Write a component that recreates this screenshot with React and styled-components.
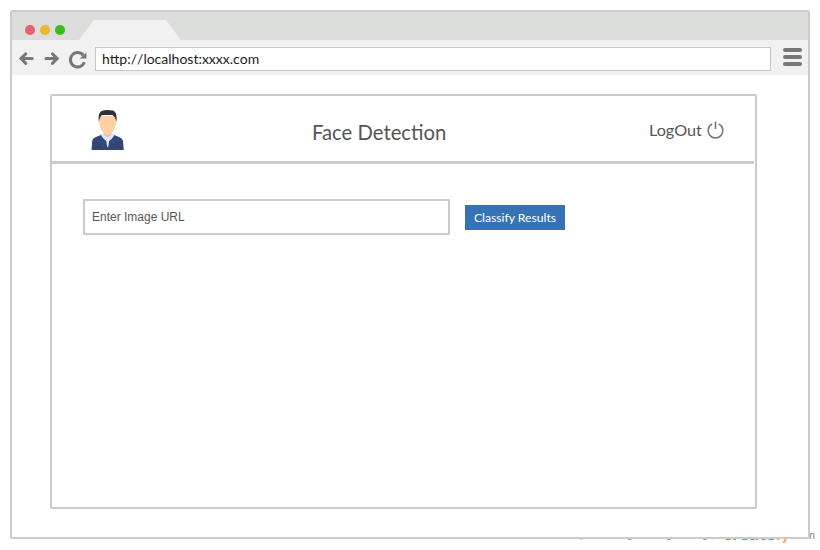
import React from "react";
import styled, { createGlobalStyle } from "styled-components";

const GlobalStyle = createGlobalStyle`
  * { box-sizing: border-box; }
  body { margin: 0; background: #fff; overflow: hidden; }
`;

const Page = styled.div`
  position: relative;
  width: 820px;
  height: 550px;
  padding: 10px;
  overflow: hidden;
  background: #fff;
  font-family: Lato, sans-serif;
`;

const Browser = styled.main`
  position: relative;
  width: 800px;
  height: 529px;
  border: 2px solid #cbcccb;
  border-radius: 2px;
  background: #fff;
`;

const TabBar = styled.div`
  display: flex;
  height: 28px;
  background: #dcdedb;
`;

const Dots = styled.div`
  display: flex;
  gap: 5.5px;
  width: 67px;
  padding: 13px 0 0 13.3px;
`;

const Dot = styled.span`
  width: 9.5px;
  height: 9.5px;
  border-radius: 50%;
  background: ${(p) => p.$color};
`;

const Tab = styled.div`
  width: 102px;
  height: 20px;
  margin-top: 8px;
  background: #f1f1f1;
  clip-path: polygon(0 100%, 15px 0, 87px 0, 100% 100%);
`;

const Toolbar = styled.div`
  display: flex;
  height: 35px;
  background: #f1f1f1;
`;

const NavIcons = styled.svg`
  width: 83px;
  height: 35px;
  flex: none;
`;

const Address = styled.div`
  width: 676px;
  height: 24px;
  margin-top: 7px;
  padding-left: 6px;
  border: 1px solid #c8c8c8;
  background: #fff;
  color: #1c1c1c;
  font-size: 14px;
  font-kerning: none;
  line-height: 22px;
`;

const Menu = styled.div`
  display: flex;
  flex-direction: column;
  gap: 3px;
  margin: 8px 0 0 12px;
`;

const MenuBar = styled.span`
  width: 19px;
  height: 4px;
  border-radius: 2px;
  background: #777;
`;

const Panel = styled.section`
  width: 707px;
  height: 415px;
  margin: 19px 0 0 38px;
  border: 2px solid #cbcbcb;
  border-radius: 2px;
`;

const Header = styled.header`
  display: flex;
  width: 702px;
  height: 68px;
  border-bottom: 3px solid #cbcbcb;
`;

const Avatar = styled.svg`
  width: 34px;
  height: 42px;
  margin: 13px 0 0 39px;
  flex: none;
`;

const Title = styled.h1`
  width: 337px;
  margin: 23px 0 0 187px;
  color: #555;
  font-size: 20.3px;
  font-weight: 400;
  line-height: 26px;
  white-space: nowrap;
`;

const Logout = styled.div`
  display: flex;
  margin-top: 23px;
  color: #555;
  font-size: 16.2px;
  line-height: 22px;
`;

const PowerIcon = styled.svg`
  width: 20px;
  height: 22px;
  margin-left: 4px;
`;

const Form = styled.div`
  display: flex;
  padding: 35px 0 0 31px;
`;

const UrlField = styled.div`
  width: 367px;
  height: 36px;
  padding-left: 7px;
  border: 2px solid #cbcbcb;
  border-radius: 1px;
  color: #555;
  font: 12px/32px "Liberation Sans", sans-serif;
`;

const Classify = styled.button`
  width: 100px;
  height: 25px;
  margin: 6px 0 0 15px;
  padding: 0;
  border: 0;
  background: #3572b6;
  color: #fff;
  font: 12.2px/25px Lato, sans-serif;
`;

const Credit = styled.div`
  position: absolute;
  left: 580px;
  top: 522px;
  display: flex;
  align-items: flex-start;
  color: #888;
  font: 11px/22px "Liberation Sans", sans-serif;
  white-space: nowrap;
`;

const CreditMark = styled.span`
  width: ${(p) => p.$width}px;
  padding-top: 1px;
`;

const Brand = styled.span`
  width: 68px;
  color: #4b94cf;
  font: 700 19px/22px Lato, sans-serif;
`;

const BrandTail = styled.span`
  color: #f7a850;
`;

const Domain = styled.span`
  padding-top: 2px;
`;

export default function App() {
  return (
    <Page>
      <GlobalStyle />
      <Credit>
        <CreditMark $width={47}>p</CreditMark>
        <CreditMark $width={39}>g</CreditMark>
        <CreditMark $width={36}>g</CreditMark>
        <CreditMark $width={9}>g</CreditMark>
        <CreditMark $width={12}>,</CreditMark>
        <Brand>create<BrandTail>ly</BrandTail></Brand>
        <Domain>.com</Domain>
      </Credit>
      <Browser>
        <TabBar>
          <Dots>
            <Dot $color="#ea5f6d" />
            <Dot $color="#edb731" />
            <Dot $color="#3dbc20" />
          </Dots>
          <Tab />
        </TabBar>
        <Toolbar>
          <NavIcons viewBox="12 40 83 35" fill="none" stroke="#777" strokeWidth="3">
            <path d="M32.2 58.6H22M25.8 53.8L21 58.6L25.8 63.4" strokeLinecap="round" />
            <path d="M46 58.6H56.2M52.4 53.8L57.2 58.6L52.4 63.4" strokeLinecap="round" />
            <path d="M83.2 55.2A7.2 7.2 0 1 0 84.4 62.3" />
            <path d="M86.4 52.5V58.4H79.8Z" fill="#777" stroke="none" />
          </NavIcons>
          <Address>http://localhost:xxxx.com</Address>
          <Menu><MenuBar /><MenuBar /><MenuBar /></Menu>
        </Toolbar>
        <Panel>
          <Header>
            <Avatar viewBox="91 109 34 42">
              <path d="M91.5 150L92.2 141Q92.6 138.2 96 137L102 134.5H113L119.5 137.2Q122.6 138.5 123 141L123.8 150Z" fill="#354678" />
              <path d="M102.3 133.8L101 135.5Q103.5 139 106.2 141L107.2 147H108.2L109.2 141Q112 139 114.3 135.5L112.7 133.8Z" fill="#dce8f8" />
              <path d="M103.8 129H111.6V134.5L107.7 137.5L103.8 134.5Z" fill="#f3bd91" />
              <path d="M99.5 116H116V123Q115 130 111 133.5Q107.7 136.5 104.4 133.5Q100 130 99.2 123Z" fill="#ffd0a5" />
              <path d="M98.8 122Q97.8 113 101.5 111Q106 109.2 113 110.6Q117.5 112.3 116.4 122L115 117.5L112.5 115H102L100 117.5Z" fill="#303236" />
              <path d="M94 142L101 145M93.5 146L102 148M112 146L121 142M112 148.5L121.5 146" fill="none" stroke="#263862" strokeWidth=".6" />
            </Avatar>
            <Title>Face Detection</Title>
            <Logout>
              LogOut
              <PowerIcon viewBox="706 119 20 22" fill="none" stroke="#777" strokeWidth="1.6">
                <path d="M712.2 124A7.4 7.4 0 1 0 718.8 124M715.5 121.5V129" />
              </PowerIcon>
            </Logout>
          </Header>
          <Form>
            <UrlField>Enter Image URL</UrlField>
            <Classify>Classify Results</Classify>
          </Form>
        </Panel>
      </Browser>
    </Page>
  );
}
